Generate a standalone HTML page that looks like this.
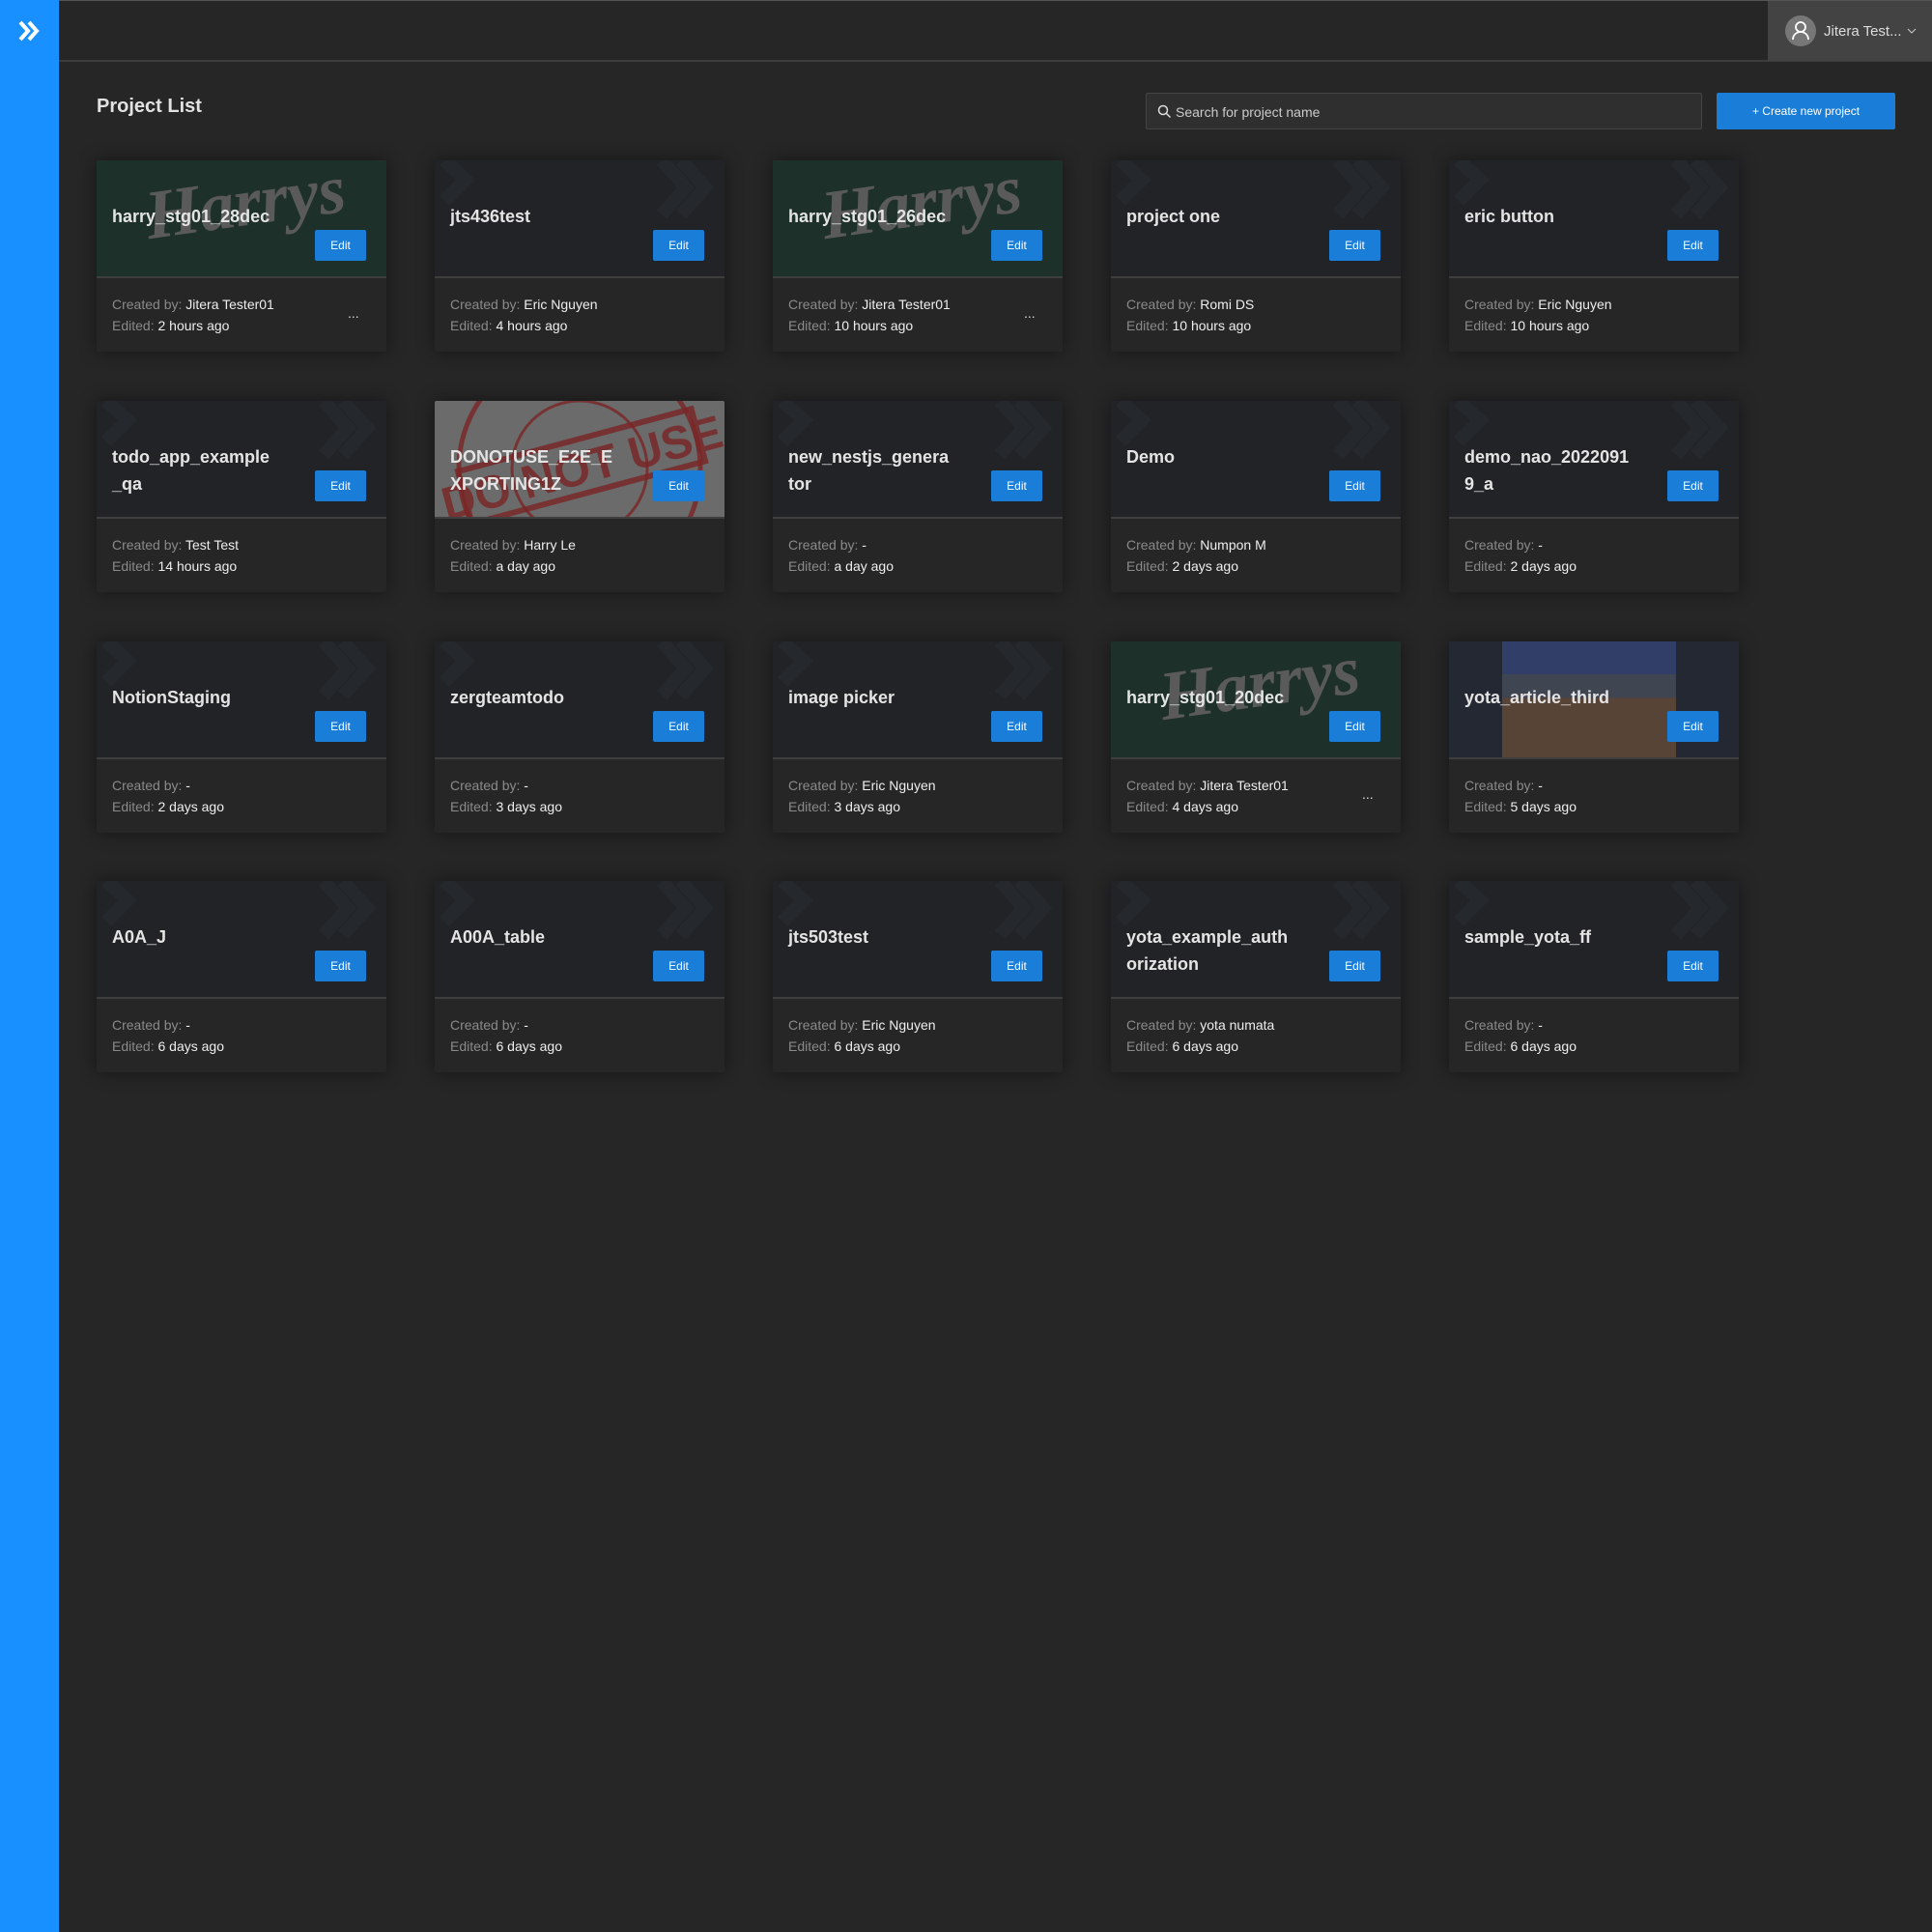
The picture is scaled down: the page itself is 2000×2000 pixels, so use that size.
<!DOCTYPE html>
<html><head><meta charset="utf-8"><style>
*{margin:0;padding:0;box-sizing:border-box}
body{width:2000px;height:2000px;background:#262626;font-family:"Liberation Sans",Arial,sans-serif;position:relative;overflow:hidden;color:#ddd}
.side{position:absolute;left:0;top:0;width:61px;height:2000px;background:#1890ff}
.top{position:absolute;left:61px;top:0;right:0;height:64px;border-top:1px solid #555;border-bottom:2px solid #3d3d3d}
.user{position:absolute;left:1830px;top:1px;width:170px;height:62px;background:#434343}
.av{position:absolute;left:18px;top:15px;width:32px;height:32px;border-radius:50%;background:#777}
.uname{position:absolute;left:58px;top:23px;font-size:15px;color:#ddd}
h1{position:absolute;left:100px;top:99px;font-size:20px;font-weight:bold;color:#e2e2e2}
.search{position:absolute;left:1186px;top:96px;width:576px;height:38px;border:1px solid #444;background:#2f2f2f;border-radius:2px}
.search span{position:absolute;left:30px;top:11px;font-size:14px;color:#ccc}
.create{position:absolute;left:1777px;top:96px;width:185px;height:38px;background:#1a7ed9;border-radius:2px;color:#fff;font-size:12px;text-align:center;line-height:38px}
.card{position:absolute;width:300px;height:198px;background:#262626;box-shadow:0 0 18px rgba(0,0,0,.45);border-radius:2px;overflow:hidden}
.hd{position:absolute;left:0;top:0;width:300px;height:122px;background:#222326;border-bottom:2px solid #3e3e3e;overflow:hidden}
.hd.harry{background:#1d3029}
.hd.dnu{background:#6b6b6b}
.hd.yota{background:#242833}
.t{position:absolute;left:16px;top:44px;width:172px;font-size:18px;font-weight:bold;line-height:28px;color:#e4e4e4;word-break:break-all}
.e{position:absolute;left:226px;top:72px;width:53px;height:32px;background:#1a7ed9;border-radius:2px;color:#fff;font-size:12px;text-align:center;line-height:32px}
.f{position:absolute;left:16px;font-size:14px;color:#8a8a8a}
.f b{font-weight:normal;color:#eee}
.dots{position:absolute;left:260px;top:150px;font-size:14px;color:#ddd}
.hs{position:absolute;left:50px;top:2px;font-family:"Liberation Serif",serif;font-style:italic;font-weight:bold;font-size:72px;color:#5a5a5a;transform:rotate(-8deg)}
</style></head><body>
<div class="side"><svg style="position:absolute;left:19px;top:20px" width="24" height="24" viewBox="0 0 24 24"><path d="M2 3l8 9-8 9M11 3l8 9-8 9" stroke="#fff" stroke-width="4" fill="none"/></svg></div>
<div class="top"></div>
<div class="user"><div class="av"><svg width="32" height="32" viewBox="0 0 32 32"><circle cx="16" cy="12" r="5" stroke="#fff" stroke-width="1.8" fill="none"/><path d="M8 25c0-5 4-8 8-8s8 3 8 8" stroke="#fff" stroke-width="1.8" fill="none"/></svg></div><div class="uname">Jitera Test...</div><svg style="position:absolute;left:144px;top:28px" width="10" height="7"><path d="M1 1l4 4 4-4" stroke="#ccc" fill="none"/></svg></div>
<h1>Project List</h1>
<div class="search"><svg style="position:absolute;left:11px;top:11px" width="15" height="15"><circle cx="6" cy="6" r="4.5" stroke="#ddd" stroke-width="1.5" fill="none"/><path d="M9.5 9.5l4 4" stroke="#ddd" stroke-width="1.5"/></svg><span>Search for project name</span></div>
<div class="create">+ Create new project</div>
<div id="cards"></div>
<script>
const d=[
["harry_stg01_28dec","Jitera Tester01","2 hours ago","harry",1],
["jts436test","Eric Nguyen","4 hours ago","",0],
["harry_stg01_26dec","Jitera Tester01","10 hours ago","harry",1],
["project one","Romi DS","10 hours ago","",0],
["eric button","Eric Nguyen","10 hours ago","",0],
["todo_app_example_qa","Test Test","14 hours ago","",0],
["DONOTUSE_E2E_EXPORTING1Z","Harry Le","a day ago","dnu",0],
["new_nestjs_generator","-","a day ago","",0],
["Demo","Numpon M","2 days ago","",0],
["demo_nao_20220919_a","-","2 days ago","",0],
["NotionStaging","-","2 days ago","",0],
["zergteamtodo","-","3 days ago","",0],
["image picker","Eric Nguyen","3 days ago","",0],
["harry_stg01_20dec","Jitera Tester01","4 days ago","harry",1],
["yota_article_third","-","5 days ago","yota",0],
["A0A_J","-","6 days ago","",0],
["A00A_table","-","6 days ago","",0],
["jts503test","Eric Nguyen","6 days ago","",0],
["yota_example_authorization","yota numata","6 days ago","",0],
["sample_yota_ff","-","6 days ago","",0]];
const tops=[166,415,664,912];let h="";
d.forEach((c,i)=>{const x=100+(i%5)*350,y=tops[Math.floor(i/5)];
let deco="";
if(c[3]=="harry")deco='<div class="hs">Harrys</div>';
else if(c[3]=="dnu")deco='<svg style="position:absolute;left:0;top:0" width="300" height="122"><circle cx="150" cy="70" r="125" stroke="#7a2525" stroke-width="5" fill="none" opacity=".8"/><circle cx="150" cy="70" r="70" stroke="#7a2525" stroke-width="3" fill="none" opacity=".8"/><g transform="rotate(-15 150 60)" opacity=".8"><rect x="25" y="40" width="250" height="56" stroke="#7a2525" stroke-width="6" fill="none"/><text x="150" y="86" text-anchor="middle" font-size="48" font-weight="bold" fill="#7a2525" font-family="Liberation Sans">DO NOT USE</text></g></svg>';
else if(c[3]=="yota")deco='<div style="position:absolute;left:55px;top:0;width:180px;height:122px;background:linear-gradient(#34457a 0 28%,#4a4f5c 28% 48%,#6a4c38 48% 100%);opacity:.75"></div>';
else deco='<svg style="position:absolute;left:0;top:0" width="300" height="122"><path d="M10 0l22 20-22 22M235 0l25 28-25 28M255 0l25 28-25 28" stroke="#25282d" stroke-width="14" fill="none"/></svg>';
h+=`<div class="card" style="left:${x}px;top:${y}px"><div class="hd ${c[3]}">${deco}<div class="t">${c[0]}</div><div class="e">Edit</div></div><div class="f" style="top:141px">Created by: <b>${c[1]}</b></div><div class="f" style="top:163px">Edited: <b>${c[2]}</b></div>${c[4]?'<div class="dots">...</div>':''}</div>`;});
document.getElementById("cards").innerHTML=h;
</script>
</body></html>
